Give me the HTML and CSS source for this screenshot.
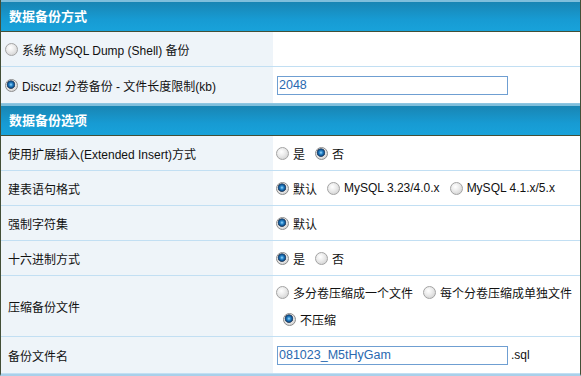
FILE: index.html
```html
<!DOCTYPE html>
<html lang="zh-CN">
<head>
  <meta charset="UTF-8" />
  <title>数据备份</title>
  <link rel="stylesheet" href="styles.css">
</head>
<body>
  <div class="panel">
    <div class="hd">数据备份方式</div>

    <div class="row">
      <div class="cell left">
        <label class="opt"><input type="radio" class="radio" name="type"> 系统 MySQL Dump (Shell) 备份</label>
      </div>
      <div class="cell right"></div>
    </div>

    <div class="row tall">
      <div class="cell left">
        <label class="opt"><input type="radio" class="radio" name="type" checked> Discuz! 分卷备份 - 文件长度限制(kb)</label>
      </div>
      <div class="cell right">
        <input type="text" class="txt" value="2048">
      </div>
    </div>

    <div class="hd">数据备份选项</div>

    <div class="row">
      <div class="cell left text">使用扩展插入(Extended Insert)方式</div>
      <div class="cell right">
        <label class="opt"><input type="radio" class="radio" name="ext"> 是</label>
        <label class="opt"><input type="radio" class="radio" name="ext" checked> 否</label>
      </div>
    </div>

    <div class="row">
      <div class="cell left text">建表语句格式</div>
      <div class="cell right">
        <label class="opt"><input type="radio" class="radio" name="sqlcompat" checked> 默认</label>
        <label class="opt"><input type="radio" class="radio" name="sqlcompat"> MySQL 3.23/4.0.x</label>
        <label class="opt"><input type="radio" class="radio" name="sqlcompat"> MySQL 4.1.x/5.x</label>
      </div>
    </div>

    <div class="row">
      <div class="cell left text">强制字符集</div>
      <div class="cell right">
        <label class="opt"><input type="radio" class="radio" name="charset" checked> 默认</label>
      </div>
    </div>

    <div class="row">
      <div class="cell left text">十六进制方式</div>
      <div class="cell right">
        <label class="opt"><input type="radio" class="radio" name="hex" checked> 是</label>
        <label class="opt"><input type="radio" class="radio" name="hex"> 否</label>
      </div>
    </div>

    <div class="row multi">
      <div class="cell left text">压缩备份文件</div>
      <div class="cell right lines">
        <div class="line">
          <label class="opt"><input type="radio" class="radio" name="zip"> 多分卷压缩成一个文件</label>
          <label class="opt"><input type="radio" class="radio" name="zip"> 每个分卷压缩成单独文件</label>
        </div>
        <div class="line indent">
          <label class="opt"><input type="radio" class="radio" name="zip" checked> 不压缩</label>
        </div>
      </div>
    </div>

    <div class="row last">
      <div class="cell left text">备份文件名</div>
      <div class="cell right">
        <input type="text" class="txt" value="081023_M5tHyGam"><span class="ext">.sql</span>
      </div>
    </div>
  </div>
</body>
</html>
```

FILE: styles.css
```css
:root {
  --edge: #434f37;
  --line: #c2dff3;
  --alt: #eef4f9;
}

body {
  margin: 0;
  font-family: "Liberation Sans", "Noto Sans CJK SC", sans-serif;
  font-size: 12px;
  color: #111;
  background: #fff;
}

.panel {
  width: 579px;
  border-left: 1px solid var(--edge);
  border-right: 1px solid var(--edge);
  border-bottom: 2px solid #a9d0ea;
}

.hd {
  height: 29px;
  line-height: 29px;
  padding-left: 8px;
  border-top: 2px solid #80bfdc;
  border-bottom: 1px solid var(--edge);
  background: linear-gradient(#1985b3, #179bd3 60%, #18a2da);
  color: #fff;
  font-size: 13px;
  font-weight: bold;
}

.row {
  display: grid;
  grid-template-columns: 272px 1fr;
  height: 34px;
  border-bottom: 1px solid var(--line);
}

.row.tall {
  height: 36px;
  border-bottom-color: #8fc6e2;
}

.row.multi {
  height: 60px;
}

.row.last {
  height: 36px;
}

.cell {
  display: flex;
  align-items: center;
}

.left {
  background: var(--alt);
  padding-left: 4px;
}

.left.text {
  padding-left: 7px;
}

.right {
  padding-left: 3px;
  gap: 10px;
}

.opt {
  display: flex;
  align-items: center;
  gap: 4px;
  white-space: nowrap;
}

.lines {
  flex-direction: column;
  align-items: flex-start;
  justify-content: center;
  gap: 0;
}

.line {
  display: flex;
  align-items: center;
  gap: 10px;
  height: 27px;
}

.line.indent {
  padding-left: 7px;
}

.radio {
  appearance: none;
  -webkit-appearance: none;
  flex: none;
  width: 13px;
  height: 13px;
  margin: 0;
  border-radius: 50%;
  border: 1px solid #a3a3a3;
  background: radial-gradient(circle at 40% 35%, #ffffff 0, #ececec 40%, #c9c9c9 100%);
}

.radio:checked {
  border-color: #8c8c8c;
  background:
    radial-gradient(circle at 45% 42%, #a8dcff 0, #2f8fd2 1.5px, #0c4a86 3.3px, #44546a 4px, transparent 4.6px),
    radial-gradient(circle at 40% 35%, #ffffff 0, #ececec 40%, #c9c9c9 100%);
}

.txt {
  box-sizing: border-box;
  width: 231px;
  height: 19px;
  margin: 0 0 0 1px;
  padding: 0 1px;
  border: 1px solid #6f9fd2;
  font-family: "Liberation Sans", sans-serif;
  font-size: 12.5px;
  color: #2a69b0;
  background: #fff;
}

.ext {
  margin-left: -7px;
}
```
